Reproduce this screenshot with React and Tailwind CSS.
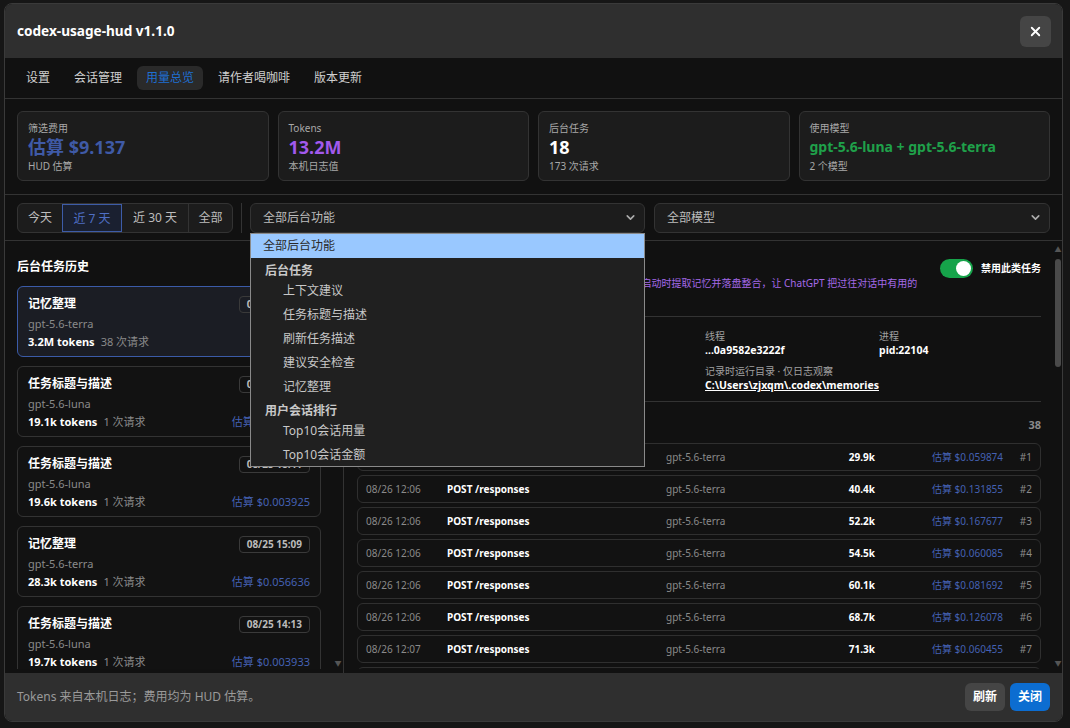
import { X, ChevronDown } from 'lucide-react';

const FONT = "font-['Noto_Sans','Noto_Sans_CJK_SC',sans-serif]";

const TABS = ['设置', '会话管理', '用量总览', '请作者喝咖啡', '版本更新'];
const RANGES = [
  { label: '今天', w: 'w-[44px]' },
  { label: '近 7 天', w: 'w-[60px]' },
  { label: '近 30 天', w: 'w-[66px]' },
  { label: '全部', w: 'w-[44px]' },
];

const TASKS = [
  { title: '记忆整理', model: 'gpt-5.6-terra', tokens: '3.2M', req: 38, time: '08/26 12:07', cost: '估算 $8.41', active: true },
  { title: '任务标题与描述', model: 'gpt-5.6-luna', tokens: '19.1k', req: 1, time: '08/26 11:52', cost: '估算 $0.003812' },
  { title: '任务标题与描述', model: 'gpt-5.6-luna', tokens: '19.6k', req: 1, time: '08/25 18:41', cost: '估算 $0.003925' },
  { title: '记忆整理', model: 'gpt-5.6-terra', tokens: '28.3k', req: 1, time: '08/25 15:09', cost: '估算 $0.056636' },
  { title: '任务标题与描述', model: 'gpt-5.6-luna', tokens: '19.7k', req: 1, time: '08/25 14:13', cost: '估算 $0.003933' },
];

const REQUESTS = [
  { time: '08/26 12:06', tokens: '29.9k', cost: '$0.059874' },
  { time: '08/26 12:06', tokens: '40.4k', cost: '$0.131855' },
  { time: '08/26 12:06', tokens: '52.2k', cost: '$0.167677' },
  { time: '08/26 12:06', tokens: '54.5k', cost: '$0.060085' },
  { time: '08/26 12:06', tokens: '60.1k', cost: '$0.081692' },
  { time: '08/26 12:06', tokens: '68.7k', cost: '$0.126078' },
  { time: '08/26 12:07', tokens: '71.3k', cost: '$0.060455' },
  { time: '08/26 12:07', tokens: '74.0k', cost: '$0.062210' },
];

const MENU = [
  { label: '全部后台功能', kind: 'selected' },
  { label: '后台任务', kind: 'group' },
  { label: '上下文建议' },
  { label: '任务标题与描述' },
  { label: '刷新任务描述' },
  { label: '建议安全检查' },
  { label: '记忆整理' },
  { label: '用户会话排行', kind: 'group' },
  { label: 'Top10会话用量' },
  { label: 'Top10会话金额' },
];

const StatCard = ({ label, value, sub, valueClass }) => (
  <div className="h-[70px] rounded-md border border-[#333] bg-[#1c1c1c] px-[10px] pt-[9px]">
    <div className="text-[10px] leading-[14px] text-[#a8a8a8]">{label}</div>
    <div className={`font-bold leading-[24px] ${valueClass}`}>{value}</div>
    <div className="text-[10px] leading-[14px] text-[#a8a8a8]">{sub}</div>
  </div>
);

const Scrollbar = ({ thumbTop, thumbHeight }) => (
  <div className="w-[8px] flex flex-col items-center">
    <div className="h-[10px] text-[7px] leading-[10px] text-[#555]">▲</div>
    <div className="flex-1 w-full relative">
      <div
        className="absolute left-[1px] right-[1px] rounded-full bg-[#4a4a4a]"
        style={{ top: thumbTop, height: thumbHeight }}
      />
    </div>
    <div className="h-[10px] text-[7px] leading-[10px] text-[#555]">▼</div>
  </div>
);

const TaskCard = ({ task }) => (
  <div
    className={`h-[71px] shrink-0 rounded-md border px-[10px] pt-[8px] ${
      task.active ? 'border-[#3b5ba8] bg-[#1b1d24]' : 'border-[#333] bg-[#121212]'
    }`}
  >
    <div className="flex items-center justify-between h-[18px]">
      <span className="text-[12px] font-bold text-white">{task.title}</span>
      <span className="h-[17px] rounded-[4px] border border-[#3a3a3a] px-[7px] text-[10px] font-bold leading-[15px] text-[#bbb]">
        {task.time}
      </span>
    </div>
    <div className="mt-[2px] text-[11px] leading-[18px] text-[#8a8a8a]">{task.model}</div>
    <div className="flex items-center justify-between text-[11px] leading-[18px]">
      <span>
        <span className="font-bold text-white">{task.tokens} tokens</span>
        <span className="ml-[6px] text-[#8a8a8a]">{task.req} 次请求</span>
      </span>
      <span className="text-[#4461b3]">{task.cost}</span>
    </div>
  </div>
);

export default function App() {
  return (
    <div className={`h-[728px] w-full overflow-hidden bg-[#161616] pt-[3px] pl-[4px] pr-[7px] ${FONT}`}>
      <div className="flex h-[719px] flex-col overflow-hidden rounded-lg border border-[#3a3a3a] bg-[#111]">
        {/* header */}
        <div className="flex h-[54px] shrink-0 items-center justify-between bg-[#2f2f2f] pl-[12px] pr-[11px]">
          <h1 className="text-[13.6px] font-bold text-white">codex-usage-hud v1.1.0</h1>
          <button className="flex h-[31px] w-[31px] items-center justify-center rounded-md bg-[#454545] text-white">
            <X size={15} strokeWidth={3} />
          </button>
        </div>

        {/* tabs */}
        <div className="flex h-[41px] shrink-0 items-center gap-[6px] border-b border-[#333] px-[12px]">
          {TABS.map((tab) => (
            <span
              key={tab}
              className={`h-[24px] rounded-md px-[9px] text-[12px] leading-[24px] ${
                tab === '用量总览' ? 'bg-[#2a2a2a] text-[#1f6fd1]' : 'text-[#cfcfcf]'
              }`}
            >
              {tab}
            </span>
          ))}
        </div>

        {/* stats */}
        <div className="grid shrink-0 grid-cols-4 gap-[9px] border-b border-[#333] px-[12px] pt-[12px] pb-[13px]">
          <StatCard label="筛选费用" value="估算 $9.137" sub="HUD 估算" valueClass="text-[18px] text-[#3f5aa6]" />
          <StatCard label="Tokens" value="13.2M" sub="本机日志值" valueClass="text-[18px] text-[#a259ec]" />
          <StatCard label="后台任务" value="18" sub="173 次请求" valueClass="text-[18px] text-white" />
          <StatCard
            label="使用模型"
            value="gpt-5.6-luna + gpt-5.6-terra"
            sub="2 个模型"
            valueClass="text-[14px] text-[#1fa14a]"
          />
        </div>

        {/* filters */}
        <div className="flex h-[46px] shrink-0 items-center border-b border-[#333] px-[12px]">
          <div className="flex h-[30px] overflow-hidden rounded-md border border-[#333] bg-[#1c1c1c]">
            {RANGES.map((r, i) => {
              const active = r.label === '近 7 天';
              const prevActive = i > 0 && RANGES[i - 1].label === '近 7 天';
              return (
                <span
                  key={r.label}
                  className={`${r.w} text-center text-[12px] leading-[28px] ${
                    active ? 'border border-[#3d5ca8] bg-[#1a2030] text-[#4f6fc4]' : 'text-[#bdbdbd]'
                  } ${i > 0 && !active && !prevActive ? 'border-l border-[#333]' : ''}`}
                >
                  {r.label}
                </span>
              );
            })}
          </div>
          <div className="ml-[8px] h-[30px] w-px bg-[#333]" />
          <div className="relative ml-[8px] w-[395px] shrink-0">
            <div className="flex h-[30px] items-center justify-between rounded-md border border-[#333] bg-[#1c1c1c] pl-[12px] pr-[7px] text-[12px] text-[#bdbdbd]">
              <span>全部后台功能</span>
              <ChevronDown size={13} strokeWidth={3} className="text-[#aaa]" />
            </div>
            {/* opened native select list */}
            <div className="absolute left-0 right-0 top-[30px] z-10 border border-[#8a8a8a] bg-[#202020] text-[12px]">
              {MENU.map((m, i) => (
                <div
                  key={i}
                  className={
                    m.kind === 'selected'
                      ? 'h-[24px] bg-[#99c8ff] pl-[12px] leading-[24px] text-[#2a2a2a]'
                      : m.kind === 'group'
                      ? 'h-[20px] pl-[14px] font-bold leading-[25px] text-[#c8c8c8]'
                      : 'h-[24px] pl-[32px] leading-[26px] text-[#c8c8c8]'
                  }
                >
                  {m.label}
                </div>
              ))}
            </div>
          </div>
          <div className="ml-[9px] flex h-[30px] flex-1 items-center justify-between rounded-md border border-[#333] bg-[#1c1c1c] pl-[12px] pr-[7px] text-[12px] text-[#bdbdbd]">
            <span>全部模型</span>
            <ChevronDown size={13} strokeWidth={3} className="text-[#aaa]" />
          </div>
        </div>

        {/* body */}
        <div className="flex min-h-0 flex-1">
          {/* left: history */}
          <div className="flex w-[339px] shrink-0 border-r border-[#333] pl-[12px] pr-[1px] pt-[4px] pb-[4px]">
            <div className="flex min-w-0 flex-1 flex-col overflow-hidden">
              <h2 className="mt-[13px] h-[18px] text-[12px] font-bold leading-[18px] text-white">后台任务历史</h2>
              <div className="mt-[10px] flex w-[304px] flex-col gap-[9px]">
                {TASKS.map((t, i) => (
                  <TaskCard key={i} task={t} />
                ))}
              </div>
            </div>
            <Scrollbar thumbTop={10} thumbHeight={120} />
          </div>

          {/* right: detail */}
          <div className="flex min-w-0 flex-1 pt-[4px] pb-[4px]">
            <div className="min-w-0 flex-1 overflow-hidden px-[13px]">
              <div className="flex items-start justify-between pt-[12px]">
                <div className="min-w-0">
                  <div className="text-[13px] font-bold leading-[18px] text-white">记忆整理</div>
                  <p className="mt-[1px] text-[10px] leading-[15px] text-[#a469e8]">
                    <span className="whitespace-nowrap">
                      记忆整理会在 Codex 空闲时于后台运行，读取本机历史会话并在启动时提取记忆并落盘整合，让 ChatGPT 把过往对话中有用的
                    </span>
                    <br />
                    信息沉淀为长期记忆。
                  </p>
                </div>
                <div className="flex shrink-0 items-center gap-[8px] pt-[2px]">
                  <span className="flex h-[19px] w-[33px] items-center justify-end rounded-full bg-[#16a34a] px-[2px]">
                    <span className="h-[15px] w-[15px] rounded-full bg-white" />
                  </span>
                  <span className="text-[10px] font-bold text-white">禁用此类任务</span>
                </div>
              </div>
              <div className="mt-[10px] border-t border-[#333]" />
              <div className="grid grid-cols-[174px_174px_174px_1fr] gap-y-[6px] pt-[12px] pb-[8px] text-[10px]">
                {[
                  ['会话', 'memories'],
                  ['触发', '启动时'],
                  ['线程', '...0a9582e3222f'],
                  ['进程', 'pid:22104'],
                ].map(([k, v]) => (
                  <div key={k}>
                    <div className="leading-[14px] text-[#a0a0a0]">{k}</div>
                    <div className="text-[10.5px] font-bold leading-[15px] text-white">{v}</div>
                  </div>
                ))}
                <div className="col-span-2">
                  <div className="leading-[14px] text-[#a0a0a0]">最近运行</div>
                  <div className="text-[10.5px] font-bold leading-[15px] text-white">08/26 12:07</div>
                </div>
                <div className="col-span-2">
                  <div className="leading-[14px] text-[#a0a0a0]">记录时运行目录 · 仅日志观察</div>
                  <div className="text-[10.5px] font-bold leading-[15px] text-white underline">
                    C:\Users\zjxqm\.codex\memories
                  </div>
                </div>
              </div>
              <div className="border-t border-[#333]" />
              <div className="flex items-center justify-between pt-[14px] pb-[9px]">
                <span className="text-[12px] font-bold text-white">请求明细</span>
                <span className="text-[11px] font-bold text-[#8a8a8a]">38</span>
              </div>
              <div className="flex flex-col gap-[4px]">
                {REQUESTS.map((r, i) => (
                  <div
                    key={i}
                    className="flex h-[28px] shrink-0 items-center rounded-md border border-[#2f2f2f] bg-[#121212] px-[8px] text-[10px]"
                  >
                    <span className="w-[81px] text-[#8a8a8a]">{r.time}</span>
                    <span className="w-[219px] font-bold text-white">POST /responses</span>
                    <span className="w-[130px] text-[#8a8a8a]">gpt-5.6-terra</span>
                    <span className="w-[79px] text-right font-bold text-white">{r.tokens}</span>
                    <span className="ml-[57px] text-[#4461b3]">估算 {r.cost}</span>
                    <span className="ml-auto text-[#8a8a8a]">#{i + 1}</span>
                  </div>
                ))}
              </div>
            </div>
            <Scrollbar thumbTop={4} thumbHeight={108} />
          </div>
        </div>

        {/* footer */}
        <div className="flex h-[48px] shrink-0 items-center justify-between bg-[#2f2f2f] px-[12px]">
          <span className="text-[12px] text-[#9a9a9a]">Tokens 来自本机日志；费用均为 HUD 估算。</span>
          <div className="flex gap-[5px]">
            <button className="h-[28px] rounded-md bg-[#454545] px-[8px] text-[12px] font-bold text-white">刷新</button>
            <button className="h-[28px] rounded-md bg-[#0c6dd1] px-[8px] text-[12px] font-bold text-white">关闭</button>
          </div>
        </div>
      </div>
    </div>
  );
}
